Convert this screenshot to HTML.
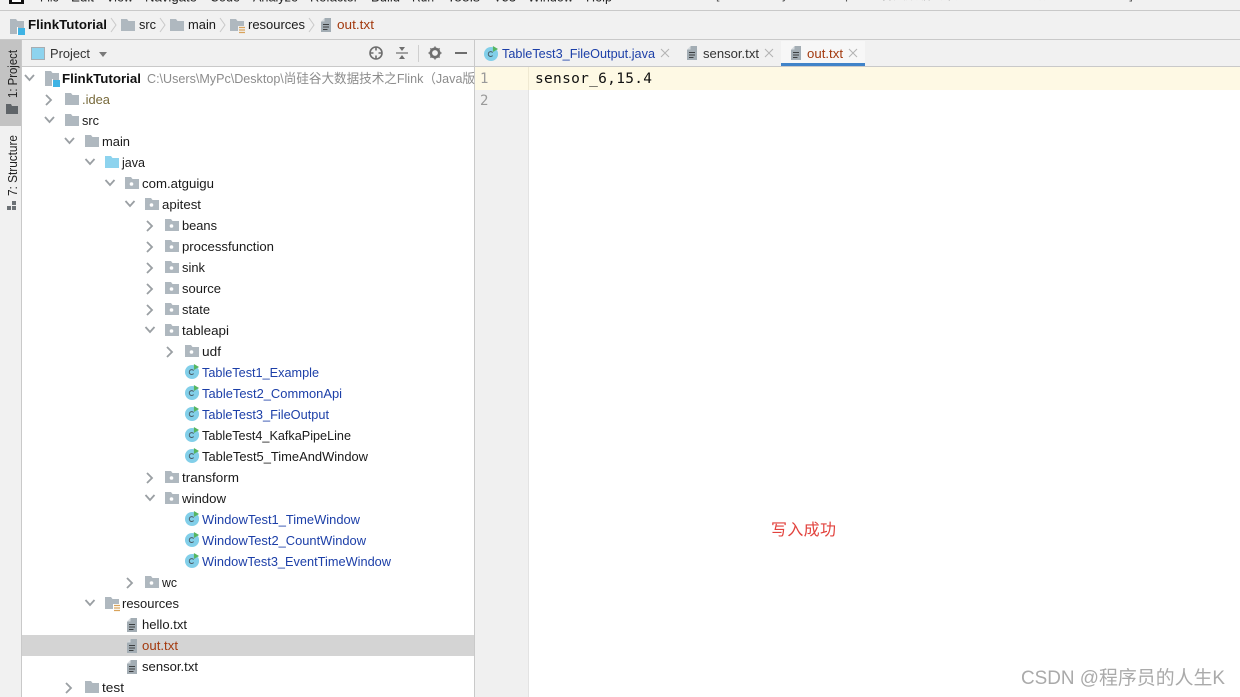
<!DOCTYPE html>
<html><head><meta charset="utf-8"><style>
html,body{margin:0;padding:0;background:#fff}
svg{display:block}
text{font-family:"Liberation Sans","Noto Sans CJK SC",sans-serif;font-size:13px;fill:#1a1a1a}
.m{font-size:12.5px;fill:#222}
.blue{fill:#1c3fa8}
.red{fill:#a33a0f}
.g{fill:#8c8c8c}
.ar{fill:none;stroke:#9a9fa3;stroke-width:1.8}
.ch{fill:none;stroke:#c9c9c9;stroke-width:1}
</style></head><body>
<svg width="1240" height="697" viewBox="0 0 1240 697" xmlns="http://www.w3.org/2000/svg">
<defs>
<symbol id="f" viewBox="0 0 14 12" overflow="visible"><path d="M0 0H6L7.500 2H14V12H0Z" fill="#afb8bf"/></symbol>
<symbol id="p" viewBox="0 0 14 12" overflow="visible"><path d="M0 0H6L7.500 2H14V12H0Z" fill="#afb8bf"/><circle cx="6.500" cy="7" r="1.800" fill="#fff"/></symbol>
<symbol id="j" viewBox="0 0 14 12" overflow="visible"><path d="M0 0H6L7.500 2H14V12H0Z" fill="#8dd3ee"/></symbol>
<symbol id="mod" viewBox="0 0 16 16" overflow="visible"><path d="M0 0H6L7.500 2H14V15H0Z" fill="#afb8bf"/><rect x="8" y="9" width="7" height="7" fill="#3fb3e4"/><rect x="7" y="8" width="1" height="8" fill="#fff"/></symbol>
<symbol id="res" viewBox="0 0 16 16" overflow="visible"><path d="M0 0H6L7.500 2H14V7H8V12H0Z" fill="#afb8bf"/><path d="M9 8.500H15M9 11H15M9 13.500H15" stroke="#d9a35b" stroke-width="1.200"/></symbol>
<symbol id="t" viewBox="0 0 10 14" overflow="visible"><path d="M4 0H10V14H0V4Z" fill="#a3adb4"/><path d="M3.500 0V3.500H0Z" fill="#d5dade"/><path d="M2 6.500H8M2 9H8M2 11.500H6.500" stroke="#3c3f41" stroke-width="1.100"/></symbol>
<symbol id="c" viewBox="0 0 16 16" overflow="visible"><circle cx="7.500" cy="8.500" r="7.500" fill="#82cfe9"/><path d="M9.200 7A2.600 2.600 0 1 0 9.200 10.200" fill="none" stroke="#4a5a63" stroke-width="1"/><path d="M9.500 0L15 3.200L9.500 6.400Z" fill="#55b560"/></symbol>
</defs>

<rect width="1240" height="697" fill="#fff"/>
<!-- top bars -->
<rect width="1240" height="39" fill="#f1f1f1"/>
<rect y="10" width="1240" height="1" fill="#c9c9c9"/>
<rect y="39" width="1240" height="1" fill="#c9c9c9"/>
<rect x="9" y="0" width="15" height="4" fill="#111"/>
<rect x="12" y="0" width="9" height="2" fill="#fff"/>
<g>
<text class="m" x="40" y="1.500" textLength="19" lengthAdjust="spacingAndGlyphs">File</text>
<text class="m" x="71" y="1.500" textLength="23" lengthAdjust="spacingAndGlyphs">Edit</text>
<text class="m" x="106" y="1.500" textLength="27" lengthAdjust="spacingAndGlyphs">View</text>
<text class="m" x="145" y="1.500" textLength="52" lengthAdjust="spacingAndGlyphs">Navigate</text>
<text class="m" x="210" y="1.500" textLength="30" lengthAdjust="spacingAndGlyphs">Code</text>
<text class="m" x="253" y="1.500" textLength="45" lengthAdjust="spacingAndGlyphs">Analyze</text>
<text class="m" x="310" y="1.500" textLength="48" lengthAdjust="spacingAndGlyphs">Refactor</text>
<text class="m" x="371" y="1.500" textLength="29" lengthAdjust="spacingAndGlyphs">Build</text>
<text class="m" x="412" y="1.500" textLength="22" lengthAdjust="spacingAndGlyphs">Run</text>
<text class="m" x="447" y="1.500" textLength="33" lengthAdjust="spacingAndGlyphs">Tools</text>
<text class="m" x="494" y="1.500" textLength="22" lengthAdjust="spacingAndGlyphs">VCS</text>
<text class="m" x="528" y="1.500" textLength="45" lengthAdjust="spacingAndGlyphs">Window</text>
<text class="m" x="586" y="1.500" textLength="26" lengthAdjust="spacingAndGlyphs">Help</text>
<text class="m" x="716" y="-1" textLength="462" lengthAdjust="spacingAndGlyphs" style="fill:#555">[C:\Users\MyPc\Desktop\尚硅谷大数据技术之Flink（Java版）\FlinkTutorial] - out.txt</text>
</g>

<!-- breadcrumb -->
<use href="#mod" x="10" y="19" width="16" height="16"/>
<text x="28" y="29" font-weight="700" textLength="79" lengthAdjust="spacingAndGlyphs" style="fill:#111">FlinkTutorial</text>
<path class="ch" d="M111 18L116 25L111 32"/>
<use href="#f" x="121" y="19" width="14" height="12"/>
<text x="139" y="29" textLength="17" lengthAdjust="spacingAndGlyphs">src</text>
<path class="ch" d="M160 18L165 25L160 32"/>
<use href="#f" x="170" y="19" width="14" height="12"/>
<text x="188" y="29" textLength="28" lengthAdjust="spacingAndGlyphs">main</text>
<path class="ch" d="M220 18L225 25L220 32"/>
<use href="#res" x="230" y="19" width="16" height="16"/>
<text x="248" y="29" textLength="57" lengthAdjust="spacingAndGlyphs">resources</text>
<path class="ch" d="M309 18L314 25L309 32"/>
<use href="#t" x="321" y="18" width="10" height="14"/>
<text class="red" x="337" y="29" textLength="37" lengthAdjust="spacingAndGlyphs">out.txt</text>

<!-- left tool stripe -->
<rect y="40" width="21" height="657" fill="#f1f1f1"/>
<rect y="40" width="21" height="86" fill="#c3c3c3"/>
<rect x="21" y="40" width="1" height="657" fill="#c9c9c9"/>
<text transform="translate(17,98) rotate(-90)" textLength="48" lengthAdjust="spacingAndGlyphs" style="font-size:12.500px;fill:#222">1: Project</text>
<path d="M6 104H11L12 106H18V114H6Z" fill="#5f6468"/>
<text transform="translate(17,196) rotate(-90)" textLength="61" lengthAdjust="spacingAndGlyphs" style="font-size:12.500px;fill:#222">7: Structure</text>
<path d="M7 206h4v4h-4zM12 206h4v4h-4zM12 201h4v4h-4z" fill="#6c7175"/>

<!-- project header -->
<rect x="22" y="40" width="453" height="26" fill="#f1f1f1"/>
<rect x="22" y="66" width="453" height="1" fill="#c9c9c9"/>
<rect x="31.500" y="47.500" width="13" height="12" fill="#8dd3ee" stroke="#a8adb1"/>
<text x="50" y="58" textLength="40" lengthAdjust="spacingAndGlyphs" style="fill:#333">Project</text>
<path d="M99 52H107L103 57Z" fill="#7a7a7a"/>
<circle cx="376" cy="53" r="6" fill="none" stroke="#6e6e6e" stroke-width="1.600"/>
<path d="M376 46.500V50.500M376 55.500V59.500M369.500 53H373.500M378.500 53H382.500" stroke="#6e6e6e" stroke-width="1.600"/>
<path d="M396 53H408" stroke="#6e6e6e" stroke-width="1.200"/>
<path d="M399 47H405L402 51ZM399 59H405L402 55Z" fill="#6e6e6e"/>
<rect x="418" y="45" width="1" height="17" fill="#cfcfcf"/>
<circle cx="435" cy="53" r="4.200" fill="none" stroke="#6e6e6e" stroke-width="2.600"/>
<path d="M435 46.500V59.500M428.500 53H441.500M430.400 48.400L439.600 57.600M439.600 48.400L430.400 57.600" stroke="#6e6e6e" stroke-width="1.500" stroke-dasharray="2 9"/>
<rect x="455" y="52" width="12" height="2" fill="#6e6e6e"/>

<!-- tabs -->
<rect x="475" y="40" width="765" height="26" fill="#f1f1f1"/>
<rect x="475" y="66" width="765" height="1" fill="#c9c9c9"/>
<rect x="474" y="40" width="1" height="657" fill="#c9c9c9"/>
<rect x="781" y="41" width="84" height="25" fill="#f7f7f7"/>
<rect x="781" y="63" width="84" height="3" fill="#4083c9"/>
<use href="#c" x="484" y="46" width="15" height="15"/>
<text class="blue" x="502" y="58" textLength="153" lengthAdjust="spacingAndGlyphs">TableTest3_FileOutput.java</text>
<path d="M661 49L669 57M669 49L661 57" stroke="#b3b3b3"/>
<use href="#t" x="687" y="46" width="10" height="14"/>
<text x="703" y="58" textLength="56" lengthAdjust="spacingAndGlyphs" style="fill:#333">sensor.txt</text>
<path d="M765 49L773 57M773 49L765 57" stroke="#b3b3b3"/>
<use href="#t" x="791" y="46" width="10" height="14"/>
<text class="red" x="807" y="58" textLength="36" lengthAdjust="spacingAndGlyphs">out.txt</text>
<path d="M849 49L857 57M857 49L849 57" stroke="#b3b3b3"/>

<!-- editor -->
<rect x="475" y="67" width="54" height="630" fill="#f0f0f0"/>
<rect x="528" y="67" width="1" height="630" fill="#e3e3e3"/>
<rect x="475" y="67" width="765" height="23" fill="#fef9e4"/>
<rect x="528" y="67" width="1" height="23" fill="#efe9d2"/>
<text x="480" y="83" style="font-family:'DejaVu Sans Mono','Liberation Mono',monospace;font-size:14px;fill:#9a9a9a">1</text>
<text x="480" y="105" style="font-family:'DejaVu Sans Mono','Liberation Mono',monospace;font-size:14px;fill:#9a9a9a">2</text>
<text x="535" y="83" textLength="117" style="font-family:'DejaVu Sans Mono','Liberation Mono',monospace;font-size:14.500px;fill:#111">sensor_6,15.4</text>
<text x="771" y="535" textLength="65" style="font-size:16px;fill:#e2423d">写入成功</text>

<!-- tree -->
<rect x="22" y="635" width="452" height="21" fill="#d4d4d4"/>
<g class="ar">
<path d="M25 75L29.500 80L34 75"/>
<path d="M46 95L51 100L46 105"/>
<path d="M45 117L49.500 122L54 117"/>
<path d="M65 138L69.500 143L74 138"/>
<path d="M85.500 159L90 164L94.500 159"/>
<path d="M105.500 180L110 185L114.500 180"/>
<path d="M125.500 201L130 206L134.500 201"/>
<path d="M147 221L152 226L147 231"/>
<path d="M147 242L152 247L147 252"/>
<path d="M147 263L152 268L147 273"/>
<path d="M147 284L152 289L147 294"/>
<path d="M147 305L152 310L147 315"/>
<path d="M145.500 327L150 332L154.500 327"/>
<path d="M167 347L172 352L167 357"/>
<path d="M147 473L152 478L147 483"/>
<path d="M145.500 495L150 500L154.500 495"/>
<path d="M127 578L132 583L127 588"/>
<path d="M85.500 600L90 605L94.500 600"/>
<path d="M66 683L71 688L66 693"/>
</g>
<use href="#mod" x="45" y="71" width="16" height="16"/>
<text x="62" y="83" font-weight="700" textLength="79" lengthAdjust="spacingAndGlyphs" style="fill:#111">FlinkTutorial</text>
<text class="g" x="147" y="83" textLength="328" lengthAdjust="spacingAndGlyphs">C:\Users\MyPc\Desktop\尚硅谷大数据技术之Flink（Java版</text>
<use href="#f" x="65" y="93" width="14" height="12"/><text x="82" y="104" textLength="28" lengthAdjust="spacingAndGlyphs" style="fill:#77693a">.idea</text>
<use href="#f" x="65" y="114" width="14" height="12"/><text x="82" y="125" textLength="17" lengthAdjust="spacingAndGlyphs">src</text>
<use href="#f" x="85" y="135" width="14" height="12"/><text x="102" y="146" textLength="28" lengthAdjust="spacingAndGlyphs">main</text>
<use href="#j" x="105" y="156" width="14" height="12"/><text x="122" y="167" textLength="23" lengthAdjust="spacingAndGlyphs">java</text>
<use href="#p" x="125" y="177" width="14" height="12"/><text x="142" y="188" textLength="72" lengthAdjust="spacingAndGlyphs">com.atguigu</text>
<use href="#p" x="145" y="198" width="14" height="12"/><text x="162" y="209" textLength="39" lengthAdjust="spacingAndGlyphs">apitest</text>
<use href="#p" x="165" y="219" width="14" height="12"/><text x="182" y="230" textLength="35" lengthAdjust="spacingAndGlyphs">beans</text>
<use href="#p" x="165" y="240" width="14" height="12"/><text x="182" y="251" textLength="92" lengthAdjust="spacingAndGlyphs">processfunction</text>
<use href="#p" x="165" y="261" width="14" height="12"/><text x="182" y="272" textLength="23" lengthAdjust="spacingAndGlyphs">sink</text>
<use href="#p" x="165" y="282" width="14" height="12"/><text x="182" y="293" textLength="39" lengthAdjust="spacingAndGlyphs">source</text>
<use href="#p" x="165" y="303" width="14" height="12"/><text x="182" y="314" textLength="28" lengthAdjust="spacingAndGlyphs">state</text>
<use href="#p" x="165" y="324" width="14" height="12"/><text x="182" y="335" textLength="47" lengthAdjust="spacingAndGlyphs">tableapi</text>
<use href="#p" x="185" y="345" width="14" height="12"/><text x="202" y="356" textLength="19" lengthAdjust="spacingAndGlyphs">udf</text>
<use href="#c" x="185" y="364" width="15" height="15"/><text class="blue" x="202" y="377" textLength="117" lengthAdjust="spacingAndGlyphs">TableTest1_Example</text>
<use href="#c" x="185" y="385" width="15" height="15"/><text class="blue" x="202" y="398" textLength="140" lengthAdjust="spacingAndGlyphs">TableTest2_CommonApi</text>
<use href="#c" x="185" y="406" width="15" height="15"/><text class="blue" x="202" y="419" textLength="127" lengthAdjust="spacingAndGlyphs">TableTest3_FileOutput</text>
<use href="#c" x="185" y="427" width="15" height="15"/><text x="202" y="440" textLength="149" lengthAdjust="spacingAndGlyphs">TableTest4_KafkaPipeLine</text>
<use href="#c" x="185" y="448" width="15" height="15"/><text x="202" y="461" textLength="166" lengthAdjust="spacingAndGlyphs">TableTest5_TimeAndWindow</text>
<use href="#p" x="165" y="471" width="14" height="12"/><text x="182" y="482" textLength="57" lengthAdjust="spacingAndGlyphs">transform</text>
<use href="#p" x="165" y="492" width="14" height="12"/><text x="182" y="503" textLength="44" lengthAdjust="spacingAndGlyphs">window</text>
<use href="#c" x="185" y="511" width="15" height="15"/><text class="blue" x="202" y="524" textLength="158" lengthAdjust="spacingAndGlyphs">WindowTest1_TimeWindow</text>
<use href="#c" x="185" y="532" width="15" height="15"/><text class="blue" x="202" y="545" textLength="164" lengthAdjust="spacingAndGlyphs">WindowTest2_CountWindow</text>
<use href="#c" x="185" y="553" width="15" height="15"/><text class="blue" x="202" y="566" textLength="189" lengthAdjust="spacingAndGlyphs">WindowTest3_EventTimeWindow</text>
<use href="#p" x="145" y="576" width="14" height="12"/><text x="162" y="587" textLength="15" lengthAdjust="spacingAndGlyphs">wc</text>
<use href="#res" x="105" y="597" width="16" height="16"/><text x="122" y="608" textLength="57" lengthAdjust="spacingAndGlyphs">resources</text>
<use href="#t" x="127" y="618" width="10" height="14"/><text x="142" y="629" textLength="45" lengthAdjust="spacingAndGlyphs">hello.txt</text>
<use href="#t" x="127" y="639" width="10" height="14"/><text class="red" x="142" y="650" textLength="36" lengthAdjust="spacingAndGlyphs">out.txt</text>
<use href="#t" x="127" y="660" width="10" height="14"/><text x="142" y="671" textLength="56" lengthAdjust="spacingAndGlyphs">sensor.txt</text>
<use href="#f" x="85" y="681" width="14" height="12"/><text x="102" y="692" textLength="22" lengthAdjust="spacingAndGlyphs">test</text>

<!-- watermark -->
<text x="1021" y="684" textLength="204" lengthAdjust="spacingAndGlyphs" style="font-size:19px;fill:#aaa">CSDN @程序员的人生K</text>
</svg>
</body></html>
